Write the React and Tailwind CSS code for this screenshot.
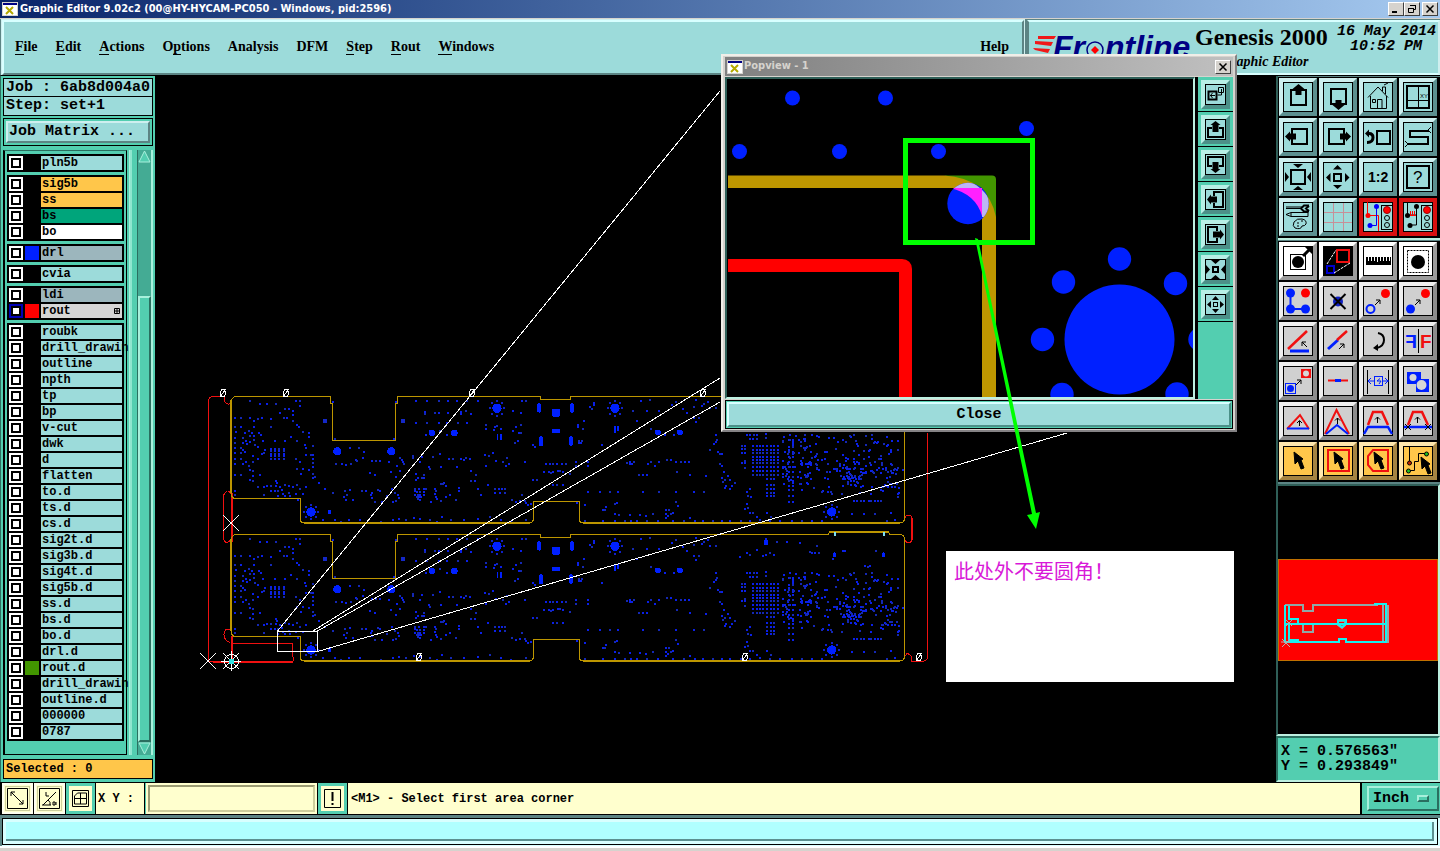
import React, { useState } from 'react';

const BLUE = '#0020ff';
const RED = '#f01010';
const GOLD = '#bd9600';

// Layer list, grouped the way the job matrix groups them
const LAYER_GROUPS = [
    [{ name: 'pln5b' }],
    [
        { name: 'sig5b', bg: 'bg-[#ffc64a]' },
        { name: 'ss', bg: 'bg-[#ffc64a]' },
        { name: 'bs', bg: 'bg-[#00a57b]' },
        { name: 'bo', bg: 'bg-white' }
    ],
    [{ name: 'drl', bg: 'bg-[#9cb6bd]', swatch: 'bg-[#0020ff]' }],
    [{ name: 'cvia' }],
    [
        { name: 'ldi', bg: 'bg-[#9cb6bd]' },
        { name: 'rout', bg: 'bg-[#d6d6d6]', swatch: 'bg-[#ff0000]', active: true }
    ],
    [
        'roubk', 'drill_drawin', 'outline', 'npth', 'tp', 'bp', 'v-cut', 'dwk', 'd', 'flatten',
        'to.d', 'ts.d', 'cs.d', 'sig2t.d', 'sig3b.d', 'sig4t.d', 'sig5b.d', 'ss.d', 'bs.d', 'bo.d', 'drl.d'
    ].map((name) => ({ name })).concat([
        { name: 'rout.d', swatch: 'bg-[#429600]' },
        { name: 'drill_drawin' },
        { name: 'outline.d' },
        { name: '000000' },
        { name: '0787' }
    ])
];

const MENUS = [
    ['', 'F', 'ile'],
    ['', 'E', 'dit'],
    ['', 'A', 'ctions'],
    ['O', 'p', 'tions'],
    ['Analysis', '', ''],
    ['DFM', '', ''],
    ['', 'S', 'tep'],
    ['', 'R', 'out'],
    ['', 'W', 'indows']
];

// Drill hits, x y pairs in board units (3 units = 1 screen pixel)
const HITS = `150 62 180 71 201 71 228 71 267 87 288 63 300 62 300 77 240 98 255 88 279 92 105 114 123 114 150 114
162 122 174 116 186 113 213 116 252 113 261 113 279 106 279 122 291 134 297 140 309 155 327 159 327 170 105 140
123 140 162 140 213 140 108 156 134 158 147 153 156 158 177 158 150 168 162 168 183 165 129 174 105 174 150 186
162 180 138 183 189 183 105 189 129 189 141 192 165 195 174 201 195 210 192 219 186 222 105 204 123 204 129 209
105 220 123 220 135 216 105 236 123 236 159 228 174 236 159 246 138 246 129 252 147 257 105 252 150 270 123 285
105 285 180 285 159 273 159 288 150 301 159 303 225 183 255 183 291 183 273 171 315 195 339 198 318 204 318 225
333 224 339 225 339 236 288 236 300 246 309 267 339 249 339 260 327 270 339 282 339 293 303 282 291 267 228 303
228 318 213 318 201 318 192 321 174 321 231 310 240 321 255 315 267 318 279 321 291 315 213 333 225 333 234 333
246 330 249 342 267 339 270 348 288 342 300 327 309 342 318 321 192 345 234 348 105 333 105 345 255 348 294 360
345 290 357 308 375 327 400 338 400 66 588 66 404 178 581 178 450 204 477 204 492 216 468 240 471 243 490 234
516 243 528 243 540 243 567 245 408 252 425 252 438 255 453 252 510 279 525 285 600 234 605 240 609 246 612 252
592 258 599 273 640 234 573 276 588 290 435 333 450 330 432 351 441 345 438 361 459 361 486 333 498 333 516 339
534 330 513 345 516 355 525 367 540 333 576 327 585 339 595 345 597 355 561 348 546 367 580 367 589 363 370 420
405 420 424 426 447 420 480 420 543 426 580 420 597 417 618 420 642 413 660 417 690 420 727 410 712 426 753 420
792 420 835 417 870 410 903 420 933 426 978 420 648 62 681 62 717 62 744 62 771 62 801 62 835 62 676 95 676 101
784 95 784 101 705 98 717 98 744 98 798 92 813 102 648 130 681 130 717 130 741 130 773 130 801 130 678 164 720 152
741 165 966 62 978 62 939 92 963 98 858 134 858 146 885 140 892 138 882 149 903 147 963 134 948 140 957 158 963 158
939 152 954 183 945 188 1000 195 1005 201 639 228 667 231 660 246 699 231 720 222 747 237 759 237 783 237 792 240
798 235 810 237 855 225 867 228 879 219 687 261 690 266 723 261 648 282 672 285 770 260 813 272 828 285 858 258
888 243 909 246 918 258 927 252 921 234 975 246 654 294 666 294 672 294 648 300 645 327 657 327 672 327 678 327
645 333 651 336 660 336 672 336 645 345 654 345 660 345 672 345 651 351 657 351 663 351 654 357 660 360 705 327
708 333 705 342 708 351 723 363 693 367 711 357 723 312 732 309 738 318 729 312 777 325 777 334 813 303 825 303
864 315 885 327 897 327 906 327 915 327 885 339 900 339 915 339 738 351 750 345 768 361 835 327 843 345 936 360
948 366 960 363 975 363 978 369 984 375 966 345 993 372 1000 300 1012 300 1038 252 1050 252 1060 252 1072 252
1085 252 1098 252 1033 276 1048 276 1054 279 1060 276 1075 273 1081 273 1090 276 1060 315 1072 315 1089 315
1170 82 1176 87 1182 75 1182 68 1299 92 1323 62 1341 92 1350 60 1377 92 1416 74 1428 66 1449 86 1461 98 1482 80
1488 60 1506 78 1512 72 1524 66 1530 84 1548 84 1488 125 1482 113 1496 113 1134 140 1152 122 1149 147 1134 134
1311 122 1352 147 1395 165 1421 165 1138 183 1144 189 1138 189 1146 182 1206 195 1128 246 1128 258 1164 246
1164 258 1282 250 1290 247 1296 252 1302 246 1290 252 1344 252 1353 246 1366 258 1377 246 1401 240 1413 240
1428 246 1443 246 1455 246 1467 246 1317 285 1329 285 1341 285 1431 276 1470 285 1518 288 1110 282 1164 336
1200 336 1230 336 1254 336 1329 336 1377 336 1428 336 1482 336 1512 336 1131 370 1155 375 1215 390 1218 381
1209 390 1245 372 1252 370 1245 402 1257 405 1290 405 1320 405 1428 366 1434 378 1398 390 1407 390 1398 402
1404 408 1413 402 1419 398 1398 414 1359 402 1338 408 1470 414 1155 423 1209 423 1245 423 1275 423 1293 423
1311 423 1341 423 1374 423 1419 423 1452 423 1485 423 1509 423 1539 423 1566 423 1590 423 1623 423 1650 423
1680 420 1710 423 1740 423 1776 423 1806 423 1836 423 1866 423 1530 210 1542 192 1548 186 1551 180 1548 165
1554 216 1560 222 1566 222 1566 258 1560 252 1572 276 1566 294 1575 300 1590 300 1584 288 1569 306 1578 318
1596 318 1605 309 1575 324 1590 327 1626 198 1635 198 1626 207 1635 207 1626 219 1635 219 1635 243 1626 249
1635 249 1635 264 1642 166 1650 166 1662 166 1672 166 1698 162 1698 174 1650 178 1660 178 1672 178 1640 336
1650 328 1644 347 1652 350 1640 372 1645 384 1635 388 1650 400 1660 400 1672 410 1700 400 1712 410
1620 118 1640 104 1650 110 1670 96 1698 110 1710 105 1722 112 1690 114 1830 102 1836 104 1846 104 1856 104
1900 124 1930 100 2028 100 1936 98 1995 145 2004 146 2010 144 1698 62 1730 72 1760 72 1800 76 1850 84
1962 363 1972 363 1982 363 1992 363 2006 363 2014 363 2024 363 2034 363 2044 363 2073 398 2085 420 2060 422
1956 403 1992 403 2025 403 2096 340 2096 325 2094 350 2108 270`.trim().split(/\s+/).map(Number);

const gridHits = (xs, ys) => xs.flatMap((x) => ys.flatMap((y) => [x, y]));

// Dense fan-out area around the large BGA
const fanoutHits = () => {
    const out = [];
    let seed = 77;
    const next = () => {
        seed = (seed * 16807) % 2147483647;
        return seed / 2147483647;
    };
    for (let i = 0; i < 70; i++) out.push(1750 + Math.floor(next() * 35) * 3, 165 + Math.floor(next() * 50) * 3);
    for (let i = 0; i < 150; i++) out.push(1800 + Math.floor(next() * 99) * 3, 165 + Math.floor(next() * 60) * 3);
    for (let i = 0; i < 32; i++) out.push(1940 + Math.floor(next() * 53) * 3, 264 + Math.floor(next() * 6) * 3);
    for (let i = 0; i < 26; i++) out.push(1930 + Math.floor(next() * 20) * 3, 285 + Math.floor(next() * 12) * 3);
    return out;
};

const ALL_HITS = [
    ...HITS,
    ...gridHits([213, 225, 237, 252], [207, 214, 222, 229, 237]),
    ...gridHits([1659, 1671, 1680, 1689, 1701, 1713, 1722, 1734], [198, 210, 219, 231, 240, 249, 261, 273, 285]),
    ...gridHits([1701, 1713, 1722], [297, 315, 327, 339, 348]),
    ...gridHits([1767, 1779], [180, 201, 216, 231, 246, 261, 276, 291, 303, 318, 330, 348, 366]),
    ...fanoutHits()
];

// Whole screen pixels only
const snap = (v) => Math.round((v - 3) / 3) * 3;

const hitPath = (dim) => {
    let d = '';
    for (let i = 0; i < ALL_HITS.length; i += 2) {
        if ((i % 3 === 0) === dim) d += `M${snap(ALL_HITS[i])} ${snap(ALL_HITS[i + 1])}h6v6h-6z`;
    }
    return d;
};

const StarPad = ({ x, y }) => (
    <g fill={BLUE}>
        <circle cx={x} cy={y} r="14" />
        {[[0, -22], [16, -16], [22, 0], [16, 16], [0, 22], [-16, 16], [-22, 0], [-16, -16]].map(([dx, dy]) => (
            <rect key={`${dx}_${dy}`} x={snap(x + dx)} y={snap(y + dy)} width="6" height="6" fill="#1020c8" />
        ))}
    </g>
);

const BoardDrills = () => (
    <g id="board-drills">
        <path d={hitPath(false)} fill="#0a20e8" />
        <path d={hitPath(true)} fill="#1428b4" />
        <g fill={BLUE}>
            <rect x="369" y="117" width="12" height="12" fill="#1428c8" />
            <rect x="603" y="117" width="12" height="12" fill="#1428c8" />
            <circle cx="412" cy="214" r="12" />
            <circle cx="574" cy="214" r="12" />
            <circle cx="696" cy="159" r="10" />
            <circle cx="763" cy="159" r="10" />
            <rect x="384" y="389" width="9" height="13" />
            <rect x="890" y="163" width="5" height="16" />
            <rect x="900" y="163" width="5" height="16" />
            <rect x="1012" y="70" width="12" height="28" rx="5" />
            <rect x="1056" y="87" width="25" height="23" rx="5" />
            <rect x="1055" y="148" width="26" height="11" rx="4" />
            <rect x="1017" y="169" width="12" height="30" rx="5" />
            <rect x="1110" y="70" width="12" height="28" rx="5" />
            <rect x="1107" y="169" width="12" height="28" rx="5" />
            <rect x="1242" y="138" width="5" height="22" />
            <rect x="1252" y="138" width="5" height="14" />
            <rect x="1364" y="150" width="18" height="14" rx="4" />
            <rect x="1430" y="150" width="18" height="14" rx="4" />
            <rect x="1692" y="66" width="12" height="14" />
            <rect x="1899" y="103" width="9" height="14" rx="4" />
            <rect x="2046" y="103" width="9" height="14" rx="4" />
        </g>
        <StarPad x={333} y={396} />
        <StarPad x={891} y={85} />
        <StarPad x={1245} y={85} />
        <StarPad x={1895} y={396} />
    </g>
);

const OriginLabel = ({ x, y }) => (
    <g stroke="#fff" fill="none">
        <ellipse cx={x} cy={y} rx="2.5" ry="3.5" />
        <path d={`M${x - 3} ${y + 4}l6 -8`} />
    </g>
);

const BoardCanvas = () => (
    <svg width="1120" height="706" viewBox="156 76 1120 706" shapeRendering="crispEdges" className="block shrink-0">
        <g transform={`translate(200 380) scale(${1 / 3})`}>
            <BoardDrills />
            <use href="#board-drills" y="414" />
        </g>

        {/* rout */}
        <g fill="none" stroke={RED}>
            <path d="M223.5 396.5H213.5Q208.500 396.5 208.5 402V661.5H293" />
            <path d="M224.500 397v4q1 3 4 3t2-4M227.500 491.500q-4 1-4 6v40q0 5 4 5M227.500 491.500q4 0 4 4M227.500 542.500l4-3" />
            <path d="M231 629.500q-7-2-7 5 0 6 6 8M231.500 643.500H292.500V652L293.500 661" />
            <path d="M904.500 519q1-4 5-4 3 1 3 6v16q0 5-4 6-4-1-4-5M911.500 517v23" />
            <path d="M927.500 433V656q0 5-4 5H911.500V657q-2-4-5-3l-2 3" />
            <path d="M231.500 493V542M231.500 636V662M213 661.500H293" strokeWidth="2" />
        </g>

        {/* profile */}
        <g fill="none" stroke={GOLD}>
            <path d="M234.500 396.500H330.500V403.500H332.500V440.500H395.500V403.500H397.500V396.500H540.500V399.500H570.500V396.500H904.500V518q0 5-5 5H583q-4 0-4-5V501.500H533.500V518q0 5-5 5H305q-5 0-5-5V498.500H234l-3-3V400z" />
            <path d="M234.500 534.500H330.500V541.500H332.500V578.500H395.500V541.500H397.500V534.500H540.500V537.500H570.500V534.500H828l2-3h58l2 3h9.500q5 0 5 5V656q0 5-5 5H583q-4 0-4-5V639.500H533.500V656q0 5-5 5H305q-5 0-5-5V636.500H234l-3-3V538z" />
            <path strokeWidth="2" d="M304 523H530M583 523H900M304 661H530M583 661H900M231 400V493M231 539V631M830 532H889" />
        </g>
        <path d="M834 532h2v4h-2zM883 532h2v4h-2z" fill="#7fe0f0" />

        <g stroke="#fff" fill="none">
            <rect x="277.500" y="631.500" width="40" height="20" />
            <path d="M277.500 631L720 91M313 631L720 378M317.500 631L720 402M317.500 651.500L1067 433" />
            <path d="M223 515l16 16M239 515l-16 16M200 653l16 16M216 653l-16 16M223 653l16 16M239 653l-16 16" />
            <path d="M221 661.500h20M231.500 651v20" />
            <circle cx="231.500" cy="661.500" r="7" />
        </g>
        <rect x="229" y="659" width="5" height="5" fill="#30e0e0" />

        {[[223, 393], [286, 393], [472, 393], [703, 393], [419, 657], [745, 657], [919, 657]].map(([x, y]) => (
            <OriginLabel key={`${x}_${y}`} x={x} y={y} />
        ))}
    </svg>
);

const Cursor = ({ x = 0, y = 0 }) => (
    <path transform={`translate(${x} ${y})`} d="M11 6l9 7-2 1 3 8-3 1-3-8-3 3z" fill="#000" stroke="#000" />
);

const SmallArrow = ({ x, y }) => (
    <path d={`M${x} ${y + 5}l5-5M${x + 1} ${y}h4v4`} stroke="#000" fill="none" />
);

const Traffic = ({ alt }) => (
    <>
        <rect x="18.500" y="3.500" width="11" height="24" fill="#9cdbda" stroke="#000" />
        <circle cx="24" cy="8" r="3.500" fill="#f00" stroke="#900" />
        <circle cx="24" cy="16" r="2.500" fill="none" stroke="#000" />
        <circle cx="24" cy="23" r="2.500" fill="none" stroke="#000" />
        {alt ? (
            <g>
                <path d="M4.500 0v13M13.500 4v19H7M13 13H5" stroke="#000" fill="none" />
                <path d="M7.500 9v4M9.500 9v4M11.500 9v4M6 13.500h7" stroke="#f00" />
                <circle cx="4.500" cy="13.500" r="2.500" />
                <circle cx="13.500" cy="4.500" r="2.500" />
                <circle cx="7" cy="23.500" r="2.500" />
            </g>
        ) : (
            <g fill="none">
                <path d="M4.500 0v13.500h11V29" stroke="#f00" />
                <path d="M13.500 4v19.500H7" stroke="#00f" />
                <circle cx="5" cy="13.500" r="2.500" fill="#f00" />
                <circle cx="13.500" cy="4.500" r="2.500" fill="#00f" />
                <circle cx="7" cy="23.500" r="2.500" fill="#00f" />
            </g>
        )}
    </>
);

// Drawn on a 30x30 field
const ICONS = {
    panUp: <><rect x="8" y="8" width="15" height="15" fill="none" stroke="#000" strokeWidth="2" /><path d="M15.500 2l6 5h-3v6h-6V7h-3z" /></>,
    panDown: <><rect x="8" y="7" width="15" height="15" fill="none" stroke="#000" strokeWidth="2" /><path d="M15.500 28l6-5h-3v-5h-6v5h-3z" /></>,
    panLeft: <><rect x="9" y="7" width="15" height="15" fill="none" stroke="#000" strokeWidth="2" /><path d="M2 14.500l5-5v2h6v6H7v2z" /></>,
    panRight: <><rect x="6" y="7" width="15" height="15" fill="none" stroke="#000" strokeWidth="2" /><path d="M28 14.500l-5-5v2h-6v6h6v2z" /></>,
    home: <path d="M5 15.500L15 5l10 10.500M7.500 14v12.500h16V14M14.500 26V17.500h4.500V26M9.500 17.500h3v3h-3zM19.500 9V5h3v7M21 3l4-2" fill="none" stroke="#000" />,
    xy: <><path d="M4 4h22v22H4zM4 18.500h22M15.500 4v22" fill="none" stroke="#000" strokeWidth="1" /><path d="M4 4h22v22H4z" fill="none" stroke="#000" strokeWidth="2" /><text x="17" y="16" fontSize="6" fontFamily="Liberation Sans">XY</text></>,
    undo: <><rect x="14" y="9" width="13" height="13" fill="none" stroke="#000" strokeWidth="2" /><path d="M4 20.500q6 0 6-5 0-4-4-4" fill="none" stroke="#000" strokeWidth="3" /><path d="M2 11.500l4-4v8z" /></>,
    serp: <><path d="M26 9H7v6h18v7H5" fill="none" stroke="#000" strokeWidth="2" /><path d="M25 8l3-3M25 8l3 3M5 22l-3-3M5 22l-3 3" stroke="#000" /></>,
    zoomOut: <><rect x="8" y="8" width="14" height="14" fill="none" stroke="#000" strokeWidth="2" /><path d="M10 2h10l-5 4zM10 28h10l-5-4zM2 10v10l4-5zM28 10v10l-4-5z" /></>,
    zoomIn: <><rect x="11" y="12" width="7" height="7" fill="none" stroke="#000" strokeWidth="2" /><path d="M10 7.500h9L14.500 3zM10 23h9l-4.500 4zM7.500 11v9L3 15.500zM22 11v9l4.500-4.500z" /></>,
    ratio: <text x="5" y="20" fontSize="14" fontWeight="bold" fontFamily="Liberation Sans">1:2</text>,
    help: <><rect x="4" y="4" width="22" height="22" fill="none" stroke="#000" strokeWidth="2" /><text x="10" y="21" fontSize="17" fontFamily="Liberation Sans">?</text></>,
    tools: <><path d="M3 5h16M3 6.500h16" stroke="#000" /><path d="M26 3.500h-5l-3 3 3 3h5M26 4l-3 2.500 3 2.500" fill="none" stroke="#000" strokeWidth="2" /><path d="M3 12.500l5-2h17v4H8zM8 11v3" fill="none" stroke="#000" /><path d="M12 26q-3-2-1-6 3-4 8-3 5 1 4 5-1 2-4 2-1 4-7 2zM14 21h2M18 19h2M14 24h2" fill="none" stroke="#000" /></>,
    grid: <path d="M10.500 1v28M20.500 1v28M1 10.500h28M1 20.500h28" stroke="#c88f98" />,
    traffic1: <Traffic />,
    traffic2: <Traffic alt />,
    padArrow: <><rect x="7.500" y="8.500" width="15" height="15" fill="none" stroke="#000" /><circle cx="15" cy="16" r="6" /><path d="M20 10l6-6" stroke="#000" strokeWidth="3" /><path d="M22 1h8v8z" /></>,
    popview: <><rect width="30" height="30" fill="#000" /><rect x="14" y="4" width="12" height="12" fill="none" stroke="#f01010" strokeWidth="2" /><rect x="4" y="20" width="7" height="7" fill="none" stroke="#0000d0" strokeWidth="2" /><path d="M4 18L13 4M11 27L27 17" stroke="#fff" strokeDasharray="3 1" /></>,
    ruler: <><rect x="3" y="11" width="25" height="8" /><path d="M5.500 11v4M8.500 11v4M11.500 11v4M14.500 11v5M17.500 11v4M20.500 11v4M23.500 11v4M26.500 11v4" stroke="#fff" /></>,
    padSelect: <><rect x="4.500" y="4.500" width="21" height="22" fill="none" stroke="#000" strokeDasharray="2 1" /><circle cx="15" cy="16" r="7" /></>,
    chain: <><path d="M7.500 7v16h15" fill="none" stroke="#0020ff" strokeWidth="2" /><circle cx="7.500" cy="7" r="4.500" fill={BLUE} /><circle cx="7.500" cy="23" r="4.500" fill={BLUE} /><circle cx="22.500" cy="23" r="4.500" fill={BLUE} /><circle cx="22.500" cy="7" r="4.500" fill="#f00" /></>,
    erase: <><circle cx="15" cy="15.500" r="5" fill="#1020c0" /><path d="M7.500 8l15 15M22.500 8l-15 15" stroke="#000" strokeWidth="2" /></>,
    move: <><circle cx="7.500" cy="23" r="4" fill="none" stroke={BLUE} strokeWidth="2" /><circle cx="22.500" cy="7.500" r="4.500" fill="#f00" /><SmallArrow x={12} y={14} /></>,
    copy: <><circle cx="7.500" cy="23" r="4.500" fill={BLUE} /><circle cx="22.500" cy="7.500" r="4.500" fill="#f00" /><SmallArrow x={12} y={14} /></>,
    angle: <><path d="M5 23L24 5" stroke="#f01010" strokeWidth="2.500" /><path d="M7 25h19" stroke={BLUE} strokeWidth="3" /><path d="M24 21l-5-5M19 20v-4h4" stroke="#000" fill="none" /></>,
    extend: <><path d="M5 23l10-9" stroke={BLUE} strokeWidth="3" /><path d="M14 14l10-9" stroke="#f01010" strokeWidth="2.500" /><SmallArrow x={16} y={18} /></>,
    rotate: <><path d="M15 7q6 1 6 7t-7 8" fill="none" stroke="#000" strokeWidth="2" /><path d="M10 22l5-4v7z" /></>,
    mirror: <><path d="M15.500 3v24" stroke="#000" /><text transform="scale(-1 1)" x="-14" y="22" fontSize="19" fontWeight="bold" fill={BLUE} fontFamily="Liberation Sans">F</text><text x="17" y="22" fontSize="19" fontWeight="bold" fill="#f01010" fontFamily="Liberation Sans">F</text></>,
    resize: <><rect x="2.500" y="17.500" width="10" height="10" fill="none" stroke={BLUE} /><circle cx="7.500" cy="22.500" r="3.500" fill={BLUE} /><rect x="18" y="3" width="10" height="9" fill="#f01010" /><circle cx="23" cy="7.500" r="3" fill="#d6d6d6" /><SmallArrow x={13} y={14} /></>,
    stretch: <><path d="M5 14.500h20" stroke="#f01010" strokeWidth="2" /><path d="M12 14.500h6" stroke={BLUE} strokeWidth="3" /></>,
    spacing: <><path d="M4.500 4v24M25.500 4v24" stroke="#000" /><rect x="11.500" y="10.500" width="8" height="9" fill="none" stroke={BLUE} /><path d="M5 15h6M20 15h6M8 12l-3 3 3 3M22 12l3 3-3 3M17 12.500l-3 2.500h4l-2 3" fill="none" stroke={BLUE} /></>,
    merge: <><path d="M4 6h14v7h8v13H13v-8H4z" fill={BLUE} /><circle cx="10" cy="11.500" r="3.500" fill="#d6d6d6" /><circle cx="18.500" cy="19" r="5" fill="#d6d6d6" /></>,
    tri1: <><path d="M4 23L17 9l9 14" fill="none" stroke="#f01010" strokeWidth="2" /><path d="M4 22.500h22" stroke={BLUE} strokeWidth="2" /><path d="M16.500 20v-5M14 17l2.500-2.500L19 17" fill="none" stroke="#000" /></>,
    tri2: <><path d="M2 28L13.500 4 26 28" fill="none" stroke="#f01010" strokeWidth="2" /><path d="M3 28l11-9 11 9" fill="none" stroke={BLUE} strokeWidth="2" /><path d="M14.500 18v-6M12 14.500l2.500-2.500 2.500 2.500" fill="none" stroke="#000" /></>,
    trap1: <><path d="M5 19l5-13h9l6 13" fill="none" stroke="#f01010" strokeWidth="2.500" /><path d="M1 28l4-7h20l4 7" fill="none" stroke={BLUE} strokeWidth="2.500" /><path d="M14.500 17v-6M12 13.500l2.500-2.500 2.500 2.500" fill="none" stroke="#000" /></>,
    trap2: <><path d="M5 19l5-13h9l6 13" fill="none" stroke="#f01010" strokeWidth="2.500" /><path d="M1 21h28" stroke={BLUE} strokeWidth="2.500" /><path d="M14.500 17v-6M12 13.500l2.500-2.500 2.500 2.500M2 18l6 6M8 18l-6 6M22 18l6 6M28 18l-6 6" fill="none" stroke="#000" /></>,
    select: <Cursor />,
    selectRect: <><rect x="5" y="4" width="21" height="21" fill="none" stroke="#f01010" strokeWidth="2" /><Cursor /></>,
    selectPoly: <><path d="M10 4h15v21H10l-5-6V10z" fill="none" stroke="#f01010" strokeWidth="2" /><Cursor /></>,
    selectNet: <><path d="M6.500 0v17M5 24.500h6.500v-9h4V7.500h8" fill="none" stroke="#000" /><circle cx="6.500" cy="17" r="2" fill="#c02000" stroke="#000" /><circle cx="5.500" cy="25" r="2" fill="#20c020" stroke="#000" /><circle cx="23.500" cy="8" r="2" fill="#20c020" stroke="#000" /><Cursor x={7} y={5} /></>
};

const VIEW_TOOLS = [
    'panUp', 'panDown', 'home', 'xy', 'panLeft', 'panRight', 'undo', 'serp',
    'zoomOut', 'zoomIn', 'ratio', 'help', 'tools', 'grid', 'traffic1', 'traffic2'
];

const EDIT_TOOLS = [
    'padArrow', 'popview', 'ruler', 'padSelect', 'chain', 'erase', 'move', 'copy',
    'angle', 'extend', 'rotate', 'mirror', 'resize', 'stretch', 'spacing', 'merge',
    'tri1', 'tri2', 'trap1', 'trap2', 'select', 'selectRect', 'selectPoly', 'selectNet'
];

const TOOL_TONES = {
    cyan: 'bg-[#9cdbda] border-t-[#ceefef] border-l-[#ceefef] border-b-[#5c9090] border-r-[#5c9090]',
    red: 'bg-[#9cdbda] border-[#d81010]',
    white: 'bg-white border-t-white border-l-white border-b-[#9c9c9c] border-r-[#9c9c9c]',
    grey: 'bg-[#d0d0d0] border-t-[#efefef] border-l-[#efefef] border-b-[#8c8c8c] border-r-[#8c8c8c]',
    amber: 'bg-[#ffc64a] border-t-[#ffe7ad] border-l-[#ffe7ad] border-b-[#a58442] border-r-[#a58442]'
};

const ToolButton = ({ name, tone }) => (
    <button aria-label={name} className={`size-[38px] border-4 ${TOOL_TONES[tone]}`}>
        <svg width="30" height="30" viewBox="0 0 30 30" className="overflow-visible">
            <rect x=".5" y=".5" width="29" height="29" fill="none" stroke="#000" />
            {ICONS[name]}
        </svg>
    </button>
);

const editTone = (i) => (i < 4 ? 'white' : i < 20 ? 'grey' : 'amber');

const WindowIcon = () => (
    <svg width="16" height="14" viewBox="0 0 16 14" className="shrink-0">
        <rect x=".5" y=".5" width="15" height="13" fill="#fff" stroke="#d6d3ce" />
        <rect x="1" y="1" width="14" height="2" fill="#000084" />
        <path d="M4 5l7 7M11 5l-7 7" stroke="#b5a800" strokeWidth="2" />
    </svg>
);

const CaptionButton = ({ label, children }) => (
    <button
        aria-label={label}
        className="flex h-[14px] w-4 items-center justify-center border border-t-white border-l-white border-b-[#404040] border-r-[#404040] bg-[#d6d3ce]"
    >
        <svg width="10" height="10" viewBox="0 0 10 10" fill="none" stroke="#000">{children}</svg>
    </button>
);

const CloseGlyph = () => <path d="M1.500 1.500l7 7M8.500 1.500l-7 7" strokeWidth="1.500" />;

const TitleBar = () => (
    <div className="flex h-[18px] items-center bg-gradient-to-r from-[#0a246a] to-[#a6caf0] px-[2px]">
        <WindowIcon />
        <h1 className="ml-[2px] flex-1 truncate font-['DejaVu_Sans_Condensed','DejaVu_Sans',sans-serif] text-[11px] font-bold leading-[18px] text-white">
            Graphic Editor 9.02c2 (00@HY-HYCAM-PC050 - Windows, pid:2596)
        </h1>
        <CaptionButton label="Minimize"><path d="M1 8h5" strokeWidth="2" /></CaptionButton>
        <CaptionButton label="Restore"><path d="M3.500 1.500h5v4h-2M3 1.500h6M1.500 4.500h5v4h-5zM1 4.500h6" /></CaptionButton>
        <div className="w-[2px]" />
        <CaptionButton label="Close"><CloseGlyph /></CaptionButton>
    </div>
);

const FrontlineLogo = () => (
    <svg width="162" height="36" viewBox="0 0 162 36" className="shrink-0">
        <path d="M5 5h18l-2 3H5zM2 10l18 1-2 4-16-2zM0 17l17 1-2 4-13-3z" fill="#f01818" />
        <g fontFamily="Liberation Sans" fontWeight="bold" fontStyle="italic" fontSize="32" fill="#000084">
            <text x="20" y="27">Fr</text>
            <text x="72" y="27">ntline</text>
        </g>
        <circle cx="62" cy="19" r="8" fill="none" stroke="#000084" strokeWidth="1.500" />
        <path d="M62 15l4 4-4 4-4-4z" fill="#f00" />
    </svg>
);

const Header = () => (
    <header className="flex h-[57px] border-t border-t-[#d6d3ce] bg-[#5c8484]">
        <nav className="mt-px ml-[2px] flex flex-1 items-center gap-[18px] border-2 border-t-[#d8ffff] border-l-[#d8ffff] border-b-[#5c8484] border-r-[#5c8484] bg-[#9cdbda] pb-[2px] pl-[11px] pr-[13px] font-['Liberation_Serif',serif] text-[14px] font-bold leading-4 outline outline-1 outline-[#ceefef]">
            {MENUS.map(([before, key, after]) => (
                <button key={before + key + after}>
                    {before}
                    <span className="border-b border-black">{key}</span>
                    {after}
                </button>
            ))}
            <button className="ml-auto">Help</button>
        </nav>
        <div className="mt-px ml-[3px] flex w-[413px] shrink-0 border-2 border-t-[#d8ffff] border-l-[#5c8484] border-b-[#d8ffff] border-r-[#ceefef] bg-[#9cdbda]">
            <div className="pl-1 pt-[9px]">
                <FrontlineLogo />
            </div>
            <div className="shrink-0 font-['Liberation_Serif',serif]">
                <div className="text-[24px] font-bold leading-[30px]">Genesis 2000</div>
                <div className="pl-[26px] pt-[2px] text-[14px] font-bold italic leading-4">Graphic Editor</div>
            </div>
            <div className="flex-1 whitespace-nowrap pr-[2px] pt-[2px] text-right font-['Liberation_Mono',monospace] text-[15px] font-bold italic leading-[15px]">
                <div>16 May 2014</div>
                <div className="pr-[14px]">10:52 PM</div>
            </div>
        </div>
    </header>
);

const LayerRow = ({ layer }) => (
    <label className="flex h-[14px] gap-[2px]">
        <input
            type="checkbox"
            className={`size-[14px] appearance-none border-2 bg-white shadow-[inset_0_0_0_2px_#000] ${layer.active ? 'border-[#0000b5]' : 'border-white'}`}
        />
        <span className={`w-[14px] ${layer.swatch || 'bg-black'}`} />
        <span className={`flex w-[81px] items-center justify-between whitespace-nowrap pl-px leading-[14px] ${layer.bg || 'bg-[#9cdbda]'}`}>
            {layer.name}
            {layer.active && (
                <svg width="6" height="6" viewBox="0 0 6 6" className="mr-[2px]">
                    <path d="M.5 .5h5v5h-5zM3 0v6M0 3h6" stroke="#000" fill="none" />
                </svg>
            )}
        </span>
    </label>
);

const Scrollbar = () => (
    <div className="flex w-[13px] flex-col bg-[#44ab94]">
        <svg width="13" height="13" viewBox="0 0 13 13">
            <path d="M6.500 1L12 12H1z" fill="#53ceb0" stroke="#a8f0dc" />
        </svg>
        <div className="h-[133px]" />
        <div className="flex-1 border-2 border-t-[#a8f0dc] border-l-[#a8f0dc] border-b-[#2a6f60] border-r-[#2a6f60] bg-[#53ceb0]" />
        <svg width="13" height="13" viewBox="0 0 13 13">
            <path d="M6.500 12L1 1h11z" fill="#53ceb0" stroke="#a8f0dc" />
        </svg>
    </div>
);

const LayerPanel = () => (
    <aside className="flex w-[155px] shrink-0 flex-col border-l border-l-[#2f6f60] border-t border-t-black bg-[#53ceb0] px-[2px] pt-[2px] font-['Liberation_Mono',monospace] font-bold">
        <div className="border border-black bg-[#9cdbda] pl-[2px] text-[15px] leading-[17px]">Job : 6ab8d004a0</div>
        <div className="border border-t-0 border-black bg-[#9cdbda] pl-[2px] text-[15px] leading-[18px]">Step: set+1</div>
        <div className="mt-[2px] border border-black p-[2px]">
            <button className="block h-[22px] w-full border-2 border-t-[#ceefef] border-l-[#ceefef] border-b-[#5c8484] border-r-[#5c8484] bg-[#9cdbda] pl-px text-left text-[15px] leading-[18px]">
                Job Matrix ...
            </button>
        </div>
        <div className="mt-1 flex flex-1 text-[12px]">
            <div className="w-[124px] border-l-2 border-t border-l-black border-t-[#2a6f60] border-r border-r-black border-b border-b-black">
                <div className="mt-[3px] ml-[2px] flex w-[117px] flex-col gap-[3px]">
                    {LAYER_GROUPS.map((group, i) => (
                        <div key={i} className="flex flex-col gap-[2px] bg-black p-[2px]">
                            {group.map((layer) => <LayerRow key={layer.name + (layer.swatch || '')} layer={layer} />)}
                        </div>
                    ))}
                </div>
            </div>
            <div className="w-[3px] border-r border-r-[#a8f0dc]" />
            <div className="w-[7px] border-l-2 border-l-[#8fe6cf]" />
            <div className="flex flex-1 border-l border-l-[#2a6f60] border-r-2 border-r-[#a8f0dc]">
                <Scrollbar />
            </div>
        </div>
        <div className="mt-[4px] mb-[3px] border border-black bg-[#ffc64a] pl-[2px] text-[12px] leading-[18px]">Selected : 0</div>
    </aside>
);

const Overview = () => (
    <div className="flex flex-1 items-center justify-center border-t-2 border-l-2 border-r-2 border-b-2 border-t-[#2f5f58] border-l-[#2f5f58] border-b-[#bdefe0] border-r-[#bdefe0] bg-black">
        <svg width="160" height="102" viewBox="0 0 160 102">
            <rect x=".5" y=".5" width="159" height="101" fill="#f00" stroke="#c07000" />
            <path d="M7 46H25V52H35V46H100M25 66v7h10V66M105 46V83M110 46V84M60 66v-4h7v4l-3 3z" fill="none" stroke="#8fa8a8" strokeWidth="2" />
            <path d="M7 46V83H61v-3h7v3H108V45H96M11 47V60h9v4M11 65V83M7 65H107M11 81H21M60 65v-4h8v4l-4 3z" fill="none" stroke="#18f0f0" strokeWidth="2" />
            <path d="M4 80l8 8M12 80l-8 8M8 61l6 6M14 61l-6 6M3 83h9" stroke="#b0b0b0" />
        </svg>
    </div>
);

const ToolPanel = () => (
    <aside className="flex w-[164px] shrink-0 flex-col border-t border-t-black bg-[#9cdbda]">
        <div className="flex flex-col border-l-2 border-l-[#2f5f58] bg-[#5c8484] pt-px">
            <div className="grid grid-cols-[repeat(4,38px)] gap-[2px] border-b-2 border-b-[#bdefe0] bg-black p-px pb-[2px]">
                {VIEW_TOOLS.map((name, i) => <ToolButton key={name} name={name} tone={i > 13 ? 'red' : 'cyan'} />)}
            </div>
            <div className="mt-px grid grid-cols-[repeat(4,38px)] gap-[2px] bg-black p-px pb-[2px] mb-[2px]">
                {EDIT_TOOLS.map((name, i) => <ToolButton key={name} name={name} tone={editTone(i)} />)}
            </div>
        </div>
        <Overview />
        <div className="border-2 border-t-[#2a6f60] border-l-[#2a6f60] border-b-[#bdefe0] border-r-[#bdefe0] bg-[#53ceb0] py-[6px] pl-[3px] font-['Liberation_Mono',monospace] text-[15px] font-bold leading-[15px]">
            <div>X = 0.576563"</div>
            <div>Y = 0.293849"</div>
        </div>
    </aside>
);

// Drawn on a 21x21 field
const POP_ICONS = {
    fit: <><path d="M3.500 7.500h8v8h-8z" fill="none" stroke="#000" strokeWidth="2" /><path d="M13.500 3.500h5v5h-5zM16.500 5v6h-4M5 11.500h5M7.500 9l-2 2.500 2 2.500" fill="none" stroke="#000" /></>,
    up: <><path d="M7 9H3v9h15V9h-4" fill="none" stroke="#000" strokeWidth="2" /><path d="M10.500 2l5 4h-2v7h-6V6h-2z" /></>,
    down: <><path d="M7 12H3V3h15v9h-4" fill="none" stroke="#000" strokeWidth="2" /><path d="M10.500 19l5-4h-2V8h-6v7h-2z" /></>,
    left: <><path d="M9 7V3h9v15H9v-4" fill="none" stroke="#000" strokeWidth="2" /><path d="M2 10.500l4-5v2h6v6H6v2z" /></>,
    right: <><path d="M12 7V3H3v15h9v-4" fill="none" stroke="#000" strokeWidth="2" /><path d="M19 10.500l-4-5v2H8v6h7v2z" /></>,
    out: <><rect x="8" y="8" width="5" height="5" fill="none" stroke="#000" strokeWidth="2" /><path d="M6 1h9l-4.500 4zM6 20h9l-4.500-4zM1 6v9l4-4.500zM20 6v9l-4-4.500z" /></>,
    in: <><rect x="8.500" y="8.500" width="4" height="4" fill="none" stroke="#000" /><path d="M7 6h7l-3.500-4zM7 15h7l-3.500 4zM6 7v7l-4-3.500zM15 7v7l4-3.500z" /></>
};

const ZoomedCorner = () => (
    <svg width="466" height="318" viewBox="727 79 466 318" className="block bg-black">
        <defs>
            <clipPath id="hole"><circle cx="968" cy="203.500" r="20.700" /></clipPath>
        </defs>
        <g fill={BLUE}>
            {[[792.5, 98], [885.5, 98], [1026.5, 128.5], [739.5, 151.5], [839.5, 151.5], [938.5, 151.5]].map(([x, y]) => (
                <circle key={x} cx={x} cy={y} r="7.500" />
            ))}
            {[[1119.5, 259], [1063.5, 282], [1175.5, 283.5], [1042.5, 339.5], [1200, 339.5], [1062, 394.5], [1177, 394]].map(([x, y]) => (
                <circle key={x} cx={x} cy={y} r="11.700" />
            ))}
            <circle cx="1119.500" cy="339.500" r="55" />
        </g>
        <path d="M728 265.500H902q3.500 0 3.500 3.500V397" fill="none" stroke="#f00" strokeWidth="13" />
        <path d="M944 175.500H992q4 0 4 4V220H982V188z" fill="#429600" />
        <path d="M728 175.500H944Q988 178 996 217V397H982V188H728z" fill={GOLD} />
        <circle cx="968" cy="203.500" r="20.700" fill={BLUE} />
        <g clipPath="url(#hole)">
            <path d="M944 175.500Q988 178 996 217H982V188H944z" fill="#bdb6f7" />
            <path d="M950 188H982V216Q976 194 950 188z" fill="#ff20ff" />
            <path d="M980 182Q988 188 991 199" stroke="#40c8e8" strokeWidth="2" fill="none" />
        </g>
    </svg>
);

const PopView = () => (
    <section className="absolute left-[721px] top-[54px] z-10 border-2 border-t-[#f0eee8] border-l-[#f0eee8] border-b-[#848284] border-r-[#848284] bg-[#d6d3ce] px-[2px] py-px">
        <div className="flex h-[19px] items-center bg-gradient-to-r from-[#808080] to-[#c0c0c0] pl-[2px] pr-[2px]">
            <WindowIcon />
            <h2 className="ml-px flex-1 font-['DejaVu_Sans_Condensed','DejaVu_Sans',sans-serif] text-[11px] font-bold text-[#d6d3ce]">Popview - 1</h2>
            <CaptionButton label="Close popview"><CloseGlyph /></CaptionButton>
        </div>
        <div className="mt-px flex bg-black">
            <div className="border-2 border-t-[#2f5f58] border-l-[#2f5f58] border-b-[#bdefe0] border-r-[#bdefe0]">
                <ZoomedCorner />
            </div>
            <div className="ml-[3px] flex w-[35px] flex-col bg-[#53ceb0]">
                {Object.keys(POP_ICONS).map((name) => (
                    <div key={name} className="flex h-[35px] items-center justify-center border-b border-b-black">
                        <button aria-label={`popview ${name}`} className="size-[29px] border-4 border-t-[#b8efe6] border-l-[#b8efe6] border-b-[#4c9088] border-r-[#4c9088] bg-[#9cdbda]">
                            <svg width="21" height="21" viewBox="0 0 21 21">
                                <rect x=".5" y=".5" width="20" height="20" fill="none" stroke="#000" />
                                {POP_ICONS[name]}
                            </svg>
                        </button>
                    </div>
                ))}
            </div>
        </div>
        <div className="mt-px border border-black bg-[#53ceb0] p-px">
            <button className="block h-[25px] w-full border-2 border-t-[#d8ffff] border-l-[#d8ffff] border-b-[#4c9088] border-r-[#4c9088] bg-[#9cdbda] font-['Liberation_Mono',monospace] text-[15px] font-bold leading-[20px]">
                Close
            </button>
        </div>
    </section>
);

const Annotation = () => (
    <>
        <svg width="140" height="400" viewBox="900 134 140 400" className="pointer-events-none absolute left-[900px] top-[134px] z-20">
            <rect x="905.500" y="140.500" width="127" height="102" fill="none" stroke="#00ff00" strokeWidth="5" />
            <path d="M975 238l3 1 58 274 4-1-4 17-9-14 5-1z" fill="#00ff00" />
        </svg>
        <div className="absolute left-[946px] top-[551px] h-[131px] w-[288px] bg-white p-2 font-['Noto_Sans_CJK_SC',sans-serif] text-[20px] leading-[24px] text-[#d818d8]">
            此处外不要圆角！
        </div>
    </>
);

const StatusBar = () => {
    const [coords, setCoords] = useState('');
    const [unit, setUnit] = useState('Inch');

    return (
        <div className="flex h-[33px] gap-px border-t border-t-black border-b border-b-black bg-black pl-[2px] font-['Liberation_Mono',monospace] text-[12px] font-bold">
            <button aria-label="Snap off" className="flex w-[31px] items-center justify-center border-2 border-[#fffff0] bg-[#ffffce] outline-1 -outline-offset-4 outline-[#cece9c]">
                <svg width="21" height="21" viewBox="0 0 21 21" fill="none" stroke="#000">
                    <path d="M.5 .5h20v20H.5zM4 4l12 12M4 8V4h4M16 12v4h-4" />
                </svg>
            </button>
            <button aria-label="Angle" className="flex w-[31px] items-center justify-center border-2 border-[#fffff0] bg-[#ffffce] outline-1 -outline-offset-4 outline-[#cece9c]">
                <svg width="21" height="21" viewBox="0 0 21 21" fill="none" stroke="#000">
                    <path d="M.5 .5h20v20H.5zM4 17L17 4M3 17h9M7 4v4h3M9 12q3 2 2 5M14 14h2v3h-2zM17 14v3" />
                </svg>
            </button>
            <button aria-label="Grid" className="flex w-[29px] items-center justify-center border-[3px] border-[#53ceb0] bg-[#ffffce]">
                <svg width="21" height="21" viewBox="0 0 21 21" fill="none" stroke="#000">
                    <path d="M2.500 2.500h16v16h-16zM4.500 8l3-3h9v11h-12zM10.500 5v11M4 10.500h13" />
                </svg>
            </button>
            <label htmlFor="xy" className="flex w-[48px] items-center bg-[#ffffce] pl-[2px]">X Y :</label>
            <div className="flex w-[172px] bg-[#ffffce] p-[2px] border-l border-l-[#53ceb0]">
                <input
                    id="xy"
                    value={coords}
                    onChange={(e) => setCoords(e.target.value)}
                    className="min-w-0 flex-1 border-2 border-t-[#9c9c73] border-l-[#9c9c73] border-b-[#cece9c] border-r-[#cece9c] px-1 outline-none"
                />
            </div>
            <button aria-label="Alert" className="flex w-[29px] items-center justify-center border-[3px] border-[#53ceb0] bg-[#ffffce]">
                <svg width="17" height="19" viewBox="0 0 17 19" fill="none" stroke="#000">
                    <path d="M.5 .5h16v18H.5z" />
                    <path d="M8.500 3v9M8.500 14v2" strokeWidth="2" />
                </svg>
            </button>
            <div className="flex flex-1 items-center bg-[#ffffce] pl-[3px]">&lt;M1&gt; - Select first area corner</div>
            <div className="ml-px flex w-[78px] bg-[#53ceb0] py-[3px] pl-[5px] pr-px">
                <label className="flex flex-1 items-center border-2 border-t-[#a8f0dc] border-l-[#a8f0dc] border-b-[#2a6f60] border-r-[#2a6f60] pl-1">
                    <select
                        aria-label="Units"
                        value={unit}
                        onChange={(e) => setUnit(e.target.value)}
                        className="w-[42px] appearance-none bg-transparent text-[15px] leading-5 outline-none"
                    >
                        <option>Inch</option>
                        <option>MM</option>
                    </select>
                    <span className="ml-[2px] h-[7px] w-3 border-2 border-t-[#a8f0dc] border-l-[#a8f0dc] border-b-[#2a6f60] border-r-[#2a6f60]" />
                </label>
            </div>
        </div>
    );
};

const App = () => (
    <div className="relative flex h-screen flex-col overflow-hidden bg-[#d6d3ce] text-black">
        <TitleBar />
        <Header />
        <div className="flex min-h-0 flex-1 bg-black">
            <LayerPanel />
            <main className="flex min-w-0 flex-1 overflow-hidden bg-black pl-px pt-px">
                <BoardCanvas />
            </main>
            <ToolPanel />
        </div>
        <StatusBar />
        <div className="h-[31px] border-t-[3px] border-t-[#5c8484] border-l-2 border-l-[#5c8484] bg-[#d8ffff] pr-[2px] pb-px">
            <div className="h-full border border-black bg-[#d8ffff] p-[3px]">
                <div className="h-full border-b-2 border-r-2 border-b-[#5c9090] border-r-[#5c9090] bg-[#b0ffff]" />
            </div>
        </div>
        <div className="h-[5px] border-t-2 border-t-white bg-[#d6d3ce]" />
        <PopView />
        <Annotation />
    </div>
);

export default App;
